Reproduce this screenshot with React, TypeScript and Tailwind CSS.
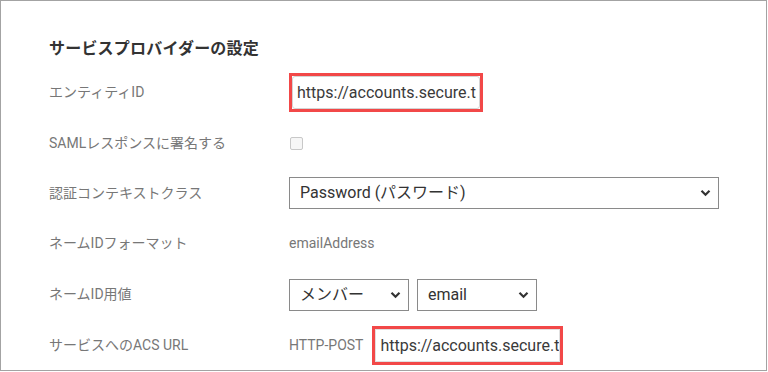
import React from "react";

const jp = { fontFamily: 'Roboto, "Noto Sans CJK JP", sans-serif' };

function Chevron() {
  return (
    <svg width="11" height="8" viewBox="0 0 11 8" className="shrink-0">
      <path d="M1.5 1.8 L5.5 5.8 L9.5 1.8" fill="none" stroke="#333" strokeWidth="2.2" />
    </svg>
  );
}

function Select({ value, className }: { value: string; className: string }) {
  return (
    <div
      className={`flex h-[32px] items-center justify-between border border-[#8a8a8a] bg-white pl-[10px] pr-[7px] text-[16px] text-[#333] ${className}`}
    >
      <span>{value}</span>
      <Chevron />
    </div>
  );
}

function UrlInput({ className }: { className: string }) {
  return (
    <div className="border-[3px] border-[#f24848]">
      <input
        readOnly
        value="https://accounts.secure.t"
        className={`block h-[33px] rounded-[3px] border border-[#d4d4d4] bg-white pl-[4px] text-[16px] text-[#3a3a3a] outline-none ${className}`}
      />
    </div>
  );
}

const rows: { label: string; h: string; field: React.ReactNode }[] = [
  {
    label: "エンティティID",
    h: "h-[51px]",
    field: <UrlInput className="w-[188px]" />,
  },
  {
    label: "SAMLレスポンスに署名する",
    h: "h-[50px]",
    field: (
      <div className="ml-[1px] h-[13px] w-[13px] rounded-[2px] border border-[#c8c8c8] bg-[#f6f6f6]" />
    ),
  },
  {
    label: "認証コンテキストクラス",
    h: "h-[50px]",
    field: <Select value="Password (パスワード)" className="w-[430px]" />,
  },
  {
    label: "ネームIDフォーマット",
    h: "h-[51px]",
    field: <span className="text-[14px] text-[#777]">emailAddress</span>,
  },
  {
    label: "ネームID用値",
    h: "h-[51px]",
    field: (
      <div className="flex gap-[8px]">
        <Select value="メンバー" className="w-[120px]" />
        <Select value="email" className="w-[120px]" />
      </div>
    ),
  },
  {
    label: "サービスへのACS URL",
    h: "h-[50px]",
    field: (
      <div className="flex items-center gap-[9px]">
        <span className="text-[14px] text-[#777]">HTTP-POST</span>
        <UrlInput className="h-[27px] w-[185px] rounded-none border-[#e0e0e0] pl-[4px]" />
      </div>
    ),
  },
];

export default function App() {
  return (
    <div className="h-[372px] w-[768px] bg-white" style={jp}>
      <div className="h-[371px] w-[767px] overflow-hidden border border-[#a3a3a3] pl-[48px] pt-[36px]">
        <h2 className="h-[24px] text-[16px] font-bold leading-[24px] tracking-[0.2px] text-[#333]">
          サービスプロバイダーの設定
        </h2>
        <div className="mt-[6px] flex flex-col">
          {rows.map((r) => (
            <div key={r.label} className={`flex items-center ${r.h}`}>
              <div className="w-[240px] shrink-0 text-[14px] text-[#777]">{r.label}</div>
              <div className="flex items-center">{r.field}</div>
            </div>
          ))}
        </div>
      </div>
    </div>
  );
}
